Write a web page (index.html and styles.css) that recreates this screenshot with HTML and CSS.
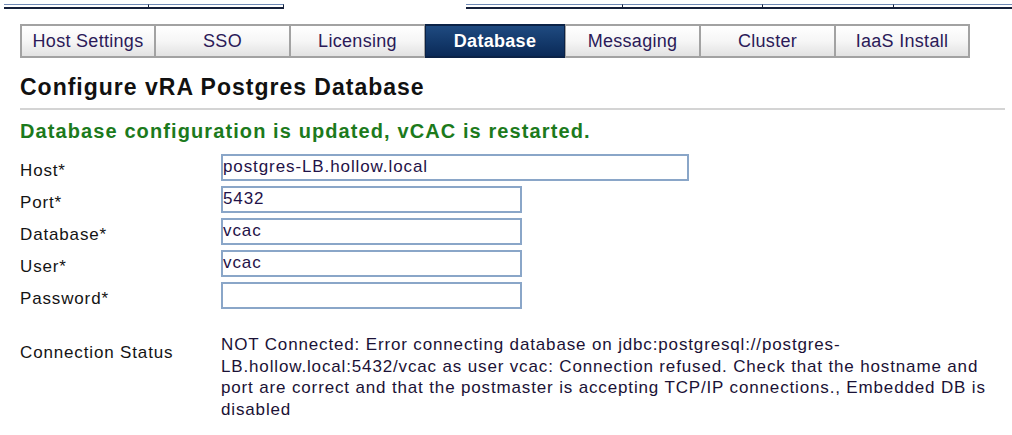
FILE: index.html
```html
<!DOCTYPE html>
<html lang="en">
<head>
<meta charset="utf-8">
<title>Configure vRA Postgres Database</title>
<link rel="stylesheet" href="styles.css">
</head>
<body>
<div class="topstrip">
  <div class="seg seg-a"></div>
  <div class="seg seg-b"></div>
  <div class="gap"></div>
  <div class="seg seg-c"></div>
  <div class="seg seg-d"></div>
  <div class="seg seg-e"></div>
  <div class="seg seg-f"></div>
</div>
<nav class="tabs">
  <div class="tab">Host Settings</div>
  <div class="tab">SSO</div>
  <div class="tab">Licensing</div>
  <div class="tab tab-active">Database</div>
  <div class="tab">Messaging</div>
  <div class="tab">Cluster</div>
  <div class="tab">IaaS Install</div>
</nav>
<h1 class="title">Configure vRA Postgres Database</h1>
<div class="msg">Database configuration is updated, vCAC is restarted.</div>
<form class="form">
  <label class="lbl">Host*</label>
  <div class="field"><input class="inp inp-wide" type="text" value="postgres-LB.hollow.local"></div>
  <label class="lbl">Port*</label>
  <div class="field"><input class="inp" type="text" value="5432"></div>
  <label class="lbl">Database*</label>
  <div class="field"><input class="inp" type="text" value="vcac"></div>
  <label class="lbl">User*</label>
  <div class="field"><input class="inp" type="text" value="vcac"></div>
  <label class="lbl">Password*</label>
  <div class="field"><input class="inp" type="password" value=""></div>
</form>
<div class="status">
  <div class="status-lbl">Connection Status</div>
  <div class="status-txt">NOT Connected: Error connecting database on jdbc:postgresql://postgres-<wbr>LB.hollow.local:5432/vcac as user vcac: Connection refused. Check that the hostname and port are correct and that the postmaster is accepting TCP/IP connections., Embedded DB is disabled</div>
</div>
</body>
</html>
```

FILE: styles.css
```css
* { box-sizing: border-box; }
html, body { margin: 0; padding: 0; background: #fff; }
body {
  font-family: "Liberation Sans", Arial, sans-serif;
  color: #141414;
  width: 1012px;
  height: 435px;
  overflow: hidden;
}
.topstrip {
  display: flex;
  margin-top: 4px;
  height: 5px;
  padding-left: 4px;
}
.seg {
  height: 5px;
  border-bottom: 2px solid #15203a;
  border-top: 1px solid #6f8ab5;
  border-right: 1px solid #15203a;
}
.seg-a { width: 145px; }
.seg-b { width: 135px; }
.gap { width: 182px; }
.seg-c { width: 157px; }
.seg-d { width: 140px; }
.seg-e { width: 131px; }
.seg-f { width: 118px; border-right: none; }

.tabs {
  display: flex;
  margin: 15px 0 0 20px;
  height: 34px;
}
.tab {
  width: 135px;
  height: 34px;
  border: 2px solid #a2a2a2;
  border-left-width: 1px;
  border-right-width: 1px;
  background: linear-gradient(#ffffff 0%, #f6f6f6 50%, #e2e2e2 100%);
  color: #2b1a58;
  font-size: 18px;
  letter-spacing: 0.3px;
  display: flex;
  align-items: center;
  justify-content: center;
  padding-bottom: 0;
}
.tab:first-child { border-left-width: 2px; }
.tab:last-child { border-right-width: 2px; }
.tab-active {
  width: 140px;
  background: linear-gradient(#1f4a80 0%, #143a6c 50%, #0b2a58 100%);
  border-color: #0b2246;
  color: #fff;
  font-weight: bold;
}
.title {
  margin: 15px 0 0 20px;
  font-size: 23px;
  line-height: 28px;
  font-weight: bold;
  color: #111;
  letter-spacing: 1px;
  padding-bottom: 7px;
  border-bottom: 2px solid #d4d4d4;
  width: 985px;
}
.msg {
  margin: 10px 0 0 20px;
  font-size: 20px;
  line-height: 22px;
  font-weight: bold;
  color: #1c7a1c;
  letter-spacing: 1.1px;
}
.form {
  display: grid;
  grid-template-columns: 201px auto;
  grid-auto-rows: 32px;
  margin: 9px 0 0 20px;
  align-items: center;
}
.lbl {
  font-size: 17px;
  letter-spacing: 0.85px;
  color: #141414;
  padding-top: 8px;
}
.field { display: flex; align-items: center; }
.inp {
  width: 301px;
  height: 27px;
  border: 2px solid #8aa6c8;
  padding: 0;
  font-family: "Liberation Sans", Arial, sans-serif;
  font-size: 17px;
  letter-spacing: 0.9px;
  color: #1f1248;
  background: #fff;
  outline: none;
}
.inp-wide { width: 468px; }
.status {
  display: grid;
  grid-template-columns: 201px 770px;
  margin: 23px 0 0 20px;
  font-size: 17px;
  line-height: 21.6px;
  letter-spacing: 0.85px;
}
.status-lbl { padding-top: 8px; color: #141414; }
.status-txt { color: #1b1236; }
```
